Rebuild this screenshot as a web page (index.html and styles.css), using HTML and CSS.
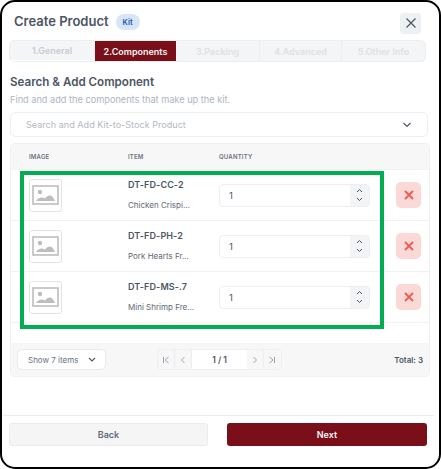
FILE: index.html
```html
<!DOCTYPE html>
<html lang="en">
<head>
<meta charset="utf-8">
<title>Create Product</title>
<link rel="stylesheet" href="styles.css">
</head>
<body>
<main class="modal">
  <header class="modal-head">
    <h1 class="title">Create Product</h1>
    <span class="badge">Kit</span>
    <button class="close" aria-label="Close"><svg width="12" height="12" viewBox="0 0 12 12"><path d="M1.5 1.5l9 9M10.5 1.5l-9 9" stroke="#4b5563" stroke-width="1.2" fill="none"/></svg></button>
  </header>
  <nav class="tabs">
    <span class="tab t1">1.General</span>
    <span class="tab t2 active">2.Components</span>
    <span class="tab t3">3.Packing</span>
    <span class="tab t4">4.Advanced</span>
    <span class="tab t5">5.Other Info</span>
  </nav>
  <h2 class="heading">Search &amp; Add Component</h2>
  <p class="sub">Find and add the components that make up the kit.</p>
  <div class="search">
    <span>Search and Add Kit-to-Stock Product</span>
    <svg width="10" height="6" viewBox="0 0 10 6"><path d="M1.5 1l3.5 3.5L8.500 1" stroke="#4b5563" stroke-width="1.2" fill="none"/></svg>
  </div>
  <section class="table">
    <div class="row head">
      <span class="c-img">IMAGE</span><span class="c-item">ITEM</span><span class="c-qty">QUANTITY</span>
    </div>
    <div class="row item">
      <div class="c-img"><div class="thumb"><svg width="27" height="20" viewBox="0 0 27 20"><rect x="1" y="1" width="25" height="18" fill="none" stroke="#bdbdbd" stroke-width="1.600"/><circle cx="8" cy="7" r="2.200" fill="#bdbdbd"/><path d="M4 16c3-4 6-4 9-2.500 3-4 7-5 10 2.500z" fill="#bdbdbd"/></svg></div></div>
      <div class="c-item"><div class="sku">DT-FD-CC-2</div><div class="name">Chicken Crispi...</div></div>
      <div class="c-qty"><div class="qty"><span class="val">1</span><span class="spin"><svg width="7" height="5" viewBox="0 0 7 5"><path d="M1 4l2.500-2.500L6 4" stroke="#4b5563" fill="none"/></svg><svg width="7" height="5" viewBox="0 0 7 5"><path d="M1 1l2.500 2.500L6 1" stroke="#4b5563" fill="none"/></svg></span></div></div>
      <button class="del" aria-label="Remove"><svg width="10" height="10" viewBox="0 0 10 10"><path d="M1 1l8 8M9 1l-8 8" stroke="#ee5a55" stroke-width="1.800" fill="none"/></svg></button>
    </div>
    <div class="row item">
      <div class="c-img"><div class="thumb"><svg width="27" height="20" viewBox="0 0 27 20"><rect x="1" y="1" width="25" height="18" fill="none" stroke="#bdbdbd" stroke-width="1.600"/><circle cx="8" cy="7" r="2.200" fill="#bdbdbd"/><path d="M4 16c3-4 6-4 9-2.500 3-4 7-5 10 2.500z" fill="#bdbdbd"/></svg></div></div>
      <div class="c-item"><div class="sku">DT-FD-PH-2</div><div class="name">Pork Hearts Fr...</div></div>
      <div class="c-qty"><div class="qty"><span class="val">1</span><span class="spin"><svg width="7" height="5" viewBox="0 0 7 5"><path d="M1 4l2.500-2.500L6 4" stroke="#4b5563" fill="none"/></svg><svg width="7" height="5" viewBox="0 0 7 5"><path d="M1 1l2.500 2.500L6 1" stroke="#4b5563" fill="none"/></svg></span></div></div>
      <button class="del" aria-label="Remove"><svg width="10" height="10" viewBox="0 0 10 10"><path d="M1 1l8 8M9 1l-8 8" stroke="#ee5a55" stroke-width="1.800" fill="none"/></svg></button>
    </div>
    <div class="row item">
      <div class="c-img"><div class="thumb"><svg width="27" height="20" viewBox="0 0 27 20"><rect x="1" y="1" width="25" height="18" fill="none" stroke="#bdbdbd" stroke-width="1.600"/><circle cx="8" cy="7" r="2.200" fill="#bdbdbd"/><path d="M4 16c3-4 6-4 9-2.500 3-4 7-5 10 2.500z" fill="#bdbdbd"/></svg></div></div>
      <div class="c-item"><div class="sku">DT-FD-MS-.7</div><div class="name">Mini Shrimp Fre...</div></div>
      <div class="c-qty"><div class="qty"><span class="val">1</span><span class="spin"><svg width="7" height="5" viewBox="0 0 7 5"><path d="M1 4l2.500-2.500L6 4" stroke="#4b5563" fill="none"/></svg><svg width="7" height="5" viewBox="0 0 7 5"><path d="M1 1l2.500 2.500L6 1" stroke="#4b5563" fill="none"/></svg></span></div></div>
      <button class="del" aria-label="Remove"><svg width="10" height="10" viewBox="0 0 10 10"><path d="M1 1l8 8M9 1l-8 8" stroke="#ee5a55" stroke-width="1.800" fill="none"/></svg></button>
    </div>
    <div class="spacer"></div>
    <footer class="table-foot">
      <div class="show"><span>Show 7 items</span><svg width="8" height="5" viewBox="0 0 8 5"><path d="M1 1l3 3 3-3" stroke="#4b5563" stroke-width="1.100" fill="none"/></svg></div>
      <div class="pager">
        <span class="pg"><svg width="8" height="8" viewBox="0 0 8 8"><path d="M1.500 1v6M6.500 1L3 4l3.500 3" stroke="#9ca3af" fill="none"/></svg></span>
        <span class="pg"><svg width="8" height="8" viewBox="0 0 8 8"><path d="M5.500 1L2.500 4l3 3" stroke="#9ca3af" fill="none"/></svg></span>
        <span class="page">1 / 1</span>
        <span class="pg"><svg width="8" height="8" viewBox="0 0 8 8"><path d="M2.500 1l3 3-3 3" stroke="#9ca3af" fill="none"/></svg></span>
        <span class="pg"><svg width="8" height="8" viewBox="0 0 8 8"><path d="M6.500 1v6M1.500 1L5 4 1.500 7" stroke="#9ca3af" fill="none"/></svg></span>
      </div>
      <div class="total">Total: 3</div>
    </footer>
  </section>
  <div class="grow"></div>
  <footer class="modal-foot">
    <button class="btn back">Back</button>
    <button class="btn next">Next</button>
  </footer>
  <div class="highlight"></div>
</main>
</body>
</html>
```
FILE: styles.css
```css
* { box-sizing: border-box; }
html, body { margin: 0; padding: 0; background: #fff; }
body { width: 441px; height: 469px; overflow: hidden; font-family: Inter, "Liberation Sans", sans-serif; }
h1, h2, p { margin: 0; }
button { font-family: inherit; padding: 0; border: 0; }

.modal {
  position: relative;
  width: 441px;
  height: 469px;
  border: 2px solid #000;
  border-radius: 15px;
  background: #fff;
  display: flex;
  flex-direction: column;
  overflow: hidden;
}

.modal-head { height: 38px; display: flex; align-items: center; padding: 0 18px 0 12px; flex: none; }
.title { font-size: 13px; font-weight: 600; color: #4b5563; line-height: 18px; }
.badge { margin-left: 7px; margin-top: 2px; width: 24px; height: 16px; border-radius: 8px; background: #d7e6f7; color: #1d4fb8; font-size: 7.500px; font-weight: 600; display: flex; align-items: center; justify-content: center; }
.close { margin-left: auto; margin-top: 4px; width: 21px; height: 21px; background: #eef1f4; border-radius: 3px; display: flex; align-items: center; justify-content: center; }

.tabs { margin: 0 0 0 7px; width: 417px; height: 22px; flex: none; background: #f4f5f6; border: 1px solid #eceef0; border-radius: 5px; display: flex; }
.tab { font-size: 9px; font-weight: 600; color: #dfe1e4; display: flex; align-items: center; justify-content: center; border-right: 1px solid #eceef0; }
.t1 { width: 85px; color: #c8ccd1; border-bottom: 1px solid #fff; }
.t2 { width: 81px; }
.t3 { width: 84px; }
.t4 { width: 82px; }
.t5 { flex: 1; border-right: 0; }
.tab.active { background: #7a0f1a; color: #f4f4f4; border: 0; }

.heading { margin: 12px 0 0 8px; font-size: 11.600px; line-height: 16px; font-weight: 600; color: #4b5563; flex: none; }
.sub { margin: 4px 0 0 8px; font-size: 9.200px; line-height: 12px; color: #aeb5bf; flex: none; }

.search { margin: 6px 0 0 8px; width: 418px; height: 25px; flex: none; border: 1px solid #eceef1; border-radius: 6px; display: flex; align-items: center; justify-content: space-between; padding: 0 15px 0 15px; font-size: 9.100px; color: #b4b9c1; }

.table { margin: 6px 0 0 8px; width: 420px; height: 234px; flex: none; border: 1px solid #f0f0f0; border-radius: 4px; display: flex; flex-direction: column; overflow: hidden; }
.row { display: flex; align-items: center; padding-left: 18px; flex: none; border-bottom: 1px solid #f1f2f3; }
.c-img { width: 99px; flex: none; }
.c-item { width: 91px; flex: none; }
.c-qty { width: 151px; flex: none; }
.row.head { height: 26px; background: #f7f7f7; font-size: 6px; font-weight: 600; color: #6b7280; letter-spacing: 0.200px; }
.row.item { height: 51px; }
.thumb { width: 33px; height: 33px; border: 1px solid #e3e3e3; border-radius: 3px; display: flex; align-items: center; justify-content: center; background: #fff; }
.sku { font-size: 9px; line-height: 12px; font-weight: 600; color: #4b5563; letter-spacing: 0.100px; }
.name { margin-top: 9px; font-size: 8px; line-height: 11px; color: #5f6875; }
.qty { width: 151px; height: 23px; border: 1px solid #eceef1; border-radius: 4px; display: flex; justify-content: space-between; overflow: hidden; }
.val { padding-left: 9px; font-size: 9.500px; color: #4b5563; align-self: center; }
.spin { width: 19px; background: #f3f4f5; display: flex; flex-direction: column; align-items: center; justify-content: center; gap: 4px; }
.del { margin-left: 26px; width: 25px; height: 26px; background: #fbd9d7; border-radius: 5px; display: flex; align-items: center; justify-content: center; }

.spacer { flex: 1; }
.table-foot { height: 33px; flex: none; background: #f7f7f7; display: flex; align-items: center; padding: 0 6px; }
.show { width: 89px; height: 21px; background: #fff; border: 1px solid #e8eaed; border-radius: 5px; display: flex; align-items: center; justify-content: space-between; padding: 0 9px 0 10px; font-size: 8px; color: #6b7280; }
.pager { margin-left: 51px; width: 125px; height: 21px; border: 1px solid #eceef0; border-radius: 5px; display: flex; align-items: center; background: #f7f7f7; }
.pg { width: 17.500px; height: 100%; display: flex; align-items: center; justify-content: center; border-right: 1px solid #eceef0; }
.pg:last-child { border-right: 0; }
.page { width: 56px; height: 100%; background: #fff; display: flex; align-items: center; justify-content: center; font-size: 8.500px; font-weight: 600; color: #4b5563; }
.total { margin-left: auto; font-size: 8px; font-weight: 600; color: #4b5563; }

.grow { flex: 1; }
.modal-foot { height: 52px; flex: none; margin: 0 5px 0 1px; border-top: 1px solid #ececec; padding: 7px 0 0 6px; display: flex; gap: 19px; align-items: flex-start; }
.btn { height: 23px; width: 199px; border-radius: 3px; font-size: 9px; font-weight: 600; }
.back { background: #f5f5f6; border: 1px solid #ececee; color: #5f6b7a; }
.next { background: #7a0f1a; color: #f5f5f5; width: 200px; }

.highlight { position: absolute; left: 18px; top: 169px; width: 364px; height: 158px; border: 4px solid #00ad50; pointer-events: none; }
```
